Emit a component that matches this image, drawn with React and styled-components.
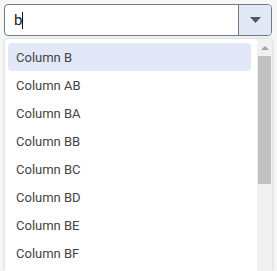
import React from "react";
import styled, { createGlobalStyle } from "styled-components";

const Global = createGlobalStyle`
  html, body { margin: 0; padding: 0; background: #f7f7f7; }
  body { font-family: Roboto, "Noto Sans", sans-serif; overflow: hidden; }
`;

const Wrap = styled.div`
  padding: 4px 5px 0 4px;
  display: flex;
  flex-direction: column;
  gap: 3px;
  height: 271px;
  box-sizing: border-box;
`;

const Combo = styled.div`
  display: flex;
  height: 32px;
  box-sizing: border-box;
  border: 1px solid #737a84;
  border-radius: 4px;
  background: #fff;
  overflow: hidden;
`;

const Input = styled.div`
  flex: 1;
  display: flex;
  align-items: center;
  padding-left: 9px;
  font-size: 15px;
  color: #222;
`;

const Caret = styled.span`
  display: inline-block;
  width: 1px;
  height: 17px;
  background: #111;
`;

const Toggle = styled.div`
  width: 32px;
  border-left: 1px solid #737a84;
  background: #e1e8f7;
  display: flex;
  align-items: center;
  justify-content: center;
`;

const Panel = styled.div`
  flex: 1;
  margin-left: 1px;
  background: #fff;
  border-radius: 4px 4px 0 0;
  box-shadow: 0 0 4px rgba(0,0,0,0.18);
  display: flex;
  overflow: hidden;
`;

const List = styled.div`
  flex: 1;
  padding: 4px 6px 0 3px;
  display: flex;
  flex-direction: column;
`;

const Item = styled.div`
  height: 28px;
  flex: none;
  display: flex;
  align-items: center;
  padding-left: 8px;
  font-size: 13px;
  color: #444;
  border-radius: 4px;
  background: ${p => (p.$active ? "#e2e8f8" : "transparent")};
`;

const Scrollbar = styled.div`
  width: 15px;
  background: #f1f1f1;
  display: flex;
  flex-direction: column;
  align-items: center;
`;

const Arrow = styled.div`
  height: 17px;
  display: flex;
  align-items: center;
  justify-content: center;
`;

const Thumb = styled.div`
  width: 13px;
  height: 128px;
  background: #c1c1c1;
`;

const items = ["Column B", "Column AB", "Column BA", "Column BB", "Column BC", "Column BD", "Column BE", "Column BF"];

export default function App() {
  return (
    <>
      <Global />
      <Wrap>
        <Combo>
          <Input>b<Caret /></Input>
          <Toggle>
            <svg width="11" height="6" viewBox="0 0 11 6"><path d="M0 0h11L5.5 6z" fill="#555" /></svg>
          </Toggle>
        </Combo>
        <Panel>
          <List>
            {items.map((t, i) => (
              <Item key={t} $active={i === 0}>{t}</Item>
            ))}
          </List>
          <Scrollbar>
            <Arrow>
              <svg width="8" height="4" viewBox="0 0 8 4"><path d="M0 4h8L4 0z" fill="#a3a3a3" /></svg>
            </Arrow>
            <Thumb />
          </Scrollbar>
        </Panel>
      </Wrap>
    </>
  );
}
